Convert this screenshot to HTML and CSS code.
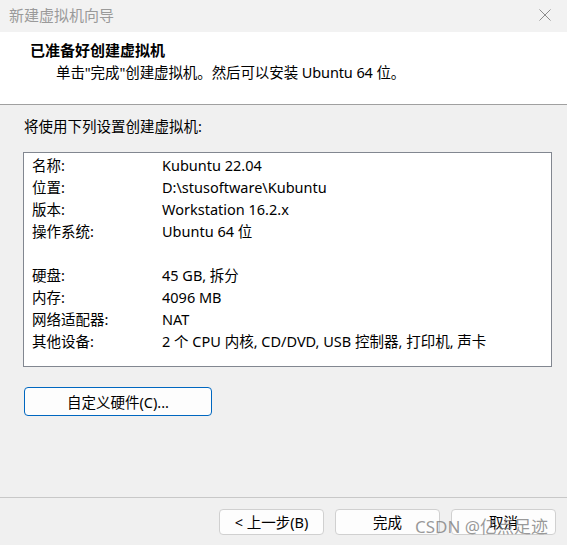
FILE: index.html
```html
<!DOCTYPE html>
<html lang="zh-CN">
<head>
<meta charset="utf-8">
<title>新建虚拟机向导</title>
<link rel="stylesheet" href="styles.css">
</head>
<body>
<div class="window">
  <div class="titlebar">
    <span class="title">新建虚拟机向导</span>
    <svg class="close" width="12" height="12" viewBox="0 0 12 12"><path d="M0.5 0.5 L11.5 11.5 M11.5 0.5 L0.5 11.5" stroke="#8c8c8c" stroke-width="1" fill="none"/></svg>
  </div>
  <div class="header">
    <div class="heading">已准备好创建虚拟机</div>
    <div class="sub">单击"完成"创建虚拟机。然后可以安装 Ubuntu 64 位。</div>
  </div>
  <div class="content">
    <div class="intro">将使用下列设置创建虚拟机:</div>
    <div class="summary">
      <div class="row"><span class="k">名称:</span><span class="v">Kubuntu 22.04</span></div>
      <div class="row"><span class="k">位置:</span><span class="v">D:\stusoftware\Kubuntu</span></div>
      <div class="row"><span class="k">版本:</span><span class="v">Workstation 16.2.x</span></div>
      <div class="row"><span class="k">操作系统:</span><span class="v">Ubuntu 64 位</span></div>
      <div class="row blank"></div>
      <div class="row"><span class="k">硬盘:</span><span class="v">45 GB, 拆分</span></div>
      <div class="row"><span class="k">内存:</span><span class="v">4096 MB</span></div>
      <div class="row"><span class="k">网络适配器:</span><span class="v">NAT</span></div>
      <div class="row"><span class="k">其他设备:</span><span class="v">2 个 CPU 内核, CD/DVD, USB 控制器, 打印机, 声卡</span></div>
    </div>
    <button class="btn custom">自定义硬件(C)...</button>
  </div>
  <div class="footer">
    <button class="btn nav">&lt; 上一步(B)</button>
    <button class="btn nav">完成</button>
    <button class="btn nav">取消</button>
    <span class="watermark">CSDN @亿点足迹</span>
  </div>
</div>
</body>
</html>
```

FILE: styles.css
```css
html, body {
  margin: 0;
  padding: 0;
}
body {
  background: #f0f0f0;
  font-family: "Noto Sans", "Noto Sans CJK SC", sans-serif;
  font-size: 14.5px;
  color: #000;
}
.window {
  width: 567px;
  height: 545px;
  display: flex;
  flex-direction: column;
  position: relative;
  overflow: hidden;
}
.titlebar {
  height: 32px;
  flex: none;
  background: #f2f2f2;
  display: flex;
  align-items: center;
  justify-content: space-between;
  padding: 0 16px 0 9px;
  box-sizing: border-box;
}
.title {
  font-family: "Noto Sans CJK SC", sans-serif;
  font-size: 15px;
  color: #9a9a9a;
  line-height: 1;
  margin-top: -3px;
}
.close {
  margin-top: -3px;
}
.header {
  background: #fff;
  height: 72px;
  flex: none;
  border-bottom: 1px solid #a0a0a0;
  box-sizing: content-box;
  padding: 0 0 0 30px;
  display: flex;
  flex-direction: column;
}
.heading {
  font-family: "Noto Sans CJK SC", sans-serif;
  font-weight: bold;
  font-size: 15px;
  line-height: 22px;
  margin-top: 7px;
}
.sub {
  font-size: 14.5px;
  line-height: 22px;
  padding-left: 26px;
  letter-spacing: -0.1px;
}
.content {
  flex: 1;
  padding: 4px 15px 0 23px;
  display: flex;
  flex-direction: column;
  align-items: flex-start;
}
.intro {
  padding-left: 1px;
  line-height: 22px;
  margin-top: 6px;
}
.summary {
  margin-top: 15px;
  width: 529px;
  height: 215px;
  box-sizing: border-box;
  background: #fff;
  border: 1px solid #828790;
  padding: 1px 8px 0 8px;
}
.row {
  display: flex;
  height: 22px;
  line-height: 22px;
  white-space: nowrap;
}
.k {
  width: 130px;
  flex: none;
}
.btn {
  font-family: "Noto Sans", "Noto Sans CJK SC", sans-serif;
  font-size: 14.5px;
  color: #000;
  background: #fdfdfd;
  border-radius: 4px;
  padding: 0;
  margin: 0;
}
.custom {
  margin-top: 20px;
  margin-left: 1px;
  width: 188px;
  height: 29px;
  border: 1px solid #0067c0;
}
.footer {
  height: 48px;
  flex: none;
  box-sizing: border-box;
  border-top: 1px solid #c8c8c8;
  display: flex;
  justify-content: flex-end;
  align-items: flex-start;
  gap: 11px;
  padding: 11px 11px 0 0;
  position: relative;
}
.nav {
  width: 105px;
  height: 26px;
  border: 1px solid #d0d0d0;
  line-height: 24px;
}
.watermark {
  position: absolute;
  left: 415px;
  top: 15px;
  font-family: "Noto Sans", "Noto Sans CJK SC", sans-serif;
  font-size: 17px;
  color: rgba(120, 120, 120, 0.75);
  white-space: nowrap;
  pointer-events: none;
}
```
